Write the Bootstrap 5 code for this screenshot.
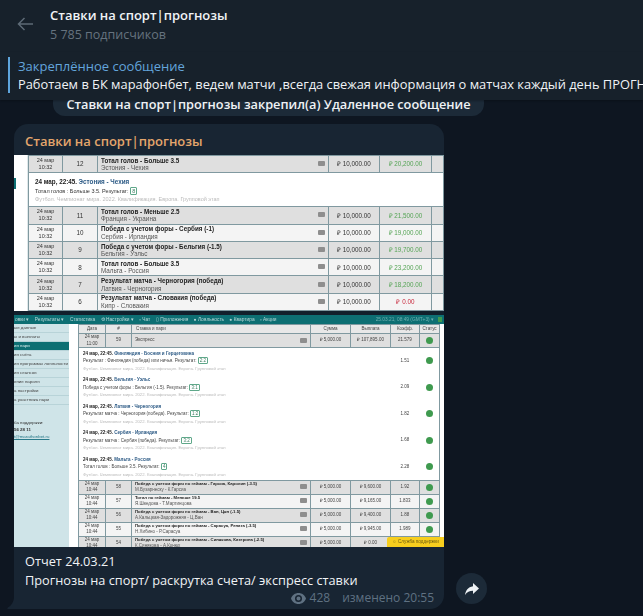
<!DOCTYPE html>
<html lang="ru">
<head>
    <meta charset="UTF-8">
    <title>Ставки на спорт|прогнозы</title>
    <link href="https://cdn.jsdelivr.net/npm/bootstrap@5.3.0/dist/css/bootstrap.min.css" rel="stylesheet">
    <style>
        html, body { height: 100%; }
        body { background: #0e1621; color: #f0f3f6; font-family: "Open Sans", "Liberation Sans", sans-serif; overflow: hidden; }
        .top-bar { background: #17212b; height: 52px; padding-left: 17px; }
        .top-arrow { margin: 17px 17px 0 0; flex: none; }
        .top-title { font-size: 13px; font-weight: 600; line-height: 18px; margin-top: 6px; }
        .top-sub { font-size: 12.5px; line-height: 18px; color: #66737f; margin-top: 2px; }
        .pin-bar { background: #17212b; height: 48px; padding: 5px 0 7px 8px; position: relative; z-index: 2; box-shadow: 0 1px 2px rgba(0,0,0,.25); white-space: nowrap; overflow: hidden; }
        .pin-line { width: 2px; background: #5ea5dc; flex: none; }
        .pin-label { color: #63a5dc; font-size: 13px; line-height: 18px; }
        .pin-text { font-size: 12.85px; line-height: 18px; }
        .service-pill { background: #1c2a38; width: 431px; height: 26px; margin: -10px 0 0 53px; border-radius: 12px; font-size: 12.75px; font-weight: 600; line-height: 24px; padding-top: 2px; text-align: center; white-space: nowrap; }
        .post-row { margin: 8px 0 0 14px; align-items: flex-end; }
        .bubble { width: 430px; height: 485px; background: #182533; border-radius: 14px 14px 14px 0; position: relative; }
        .bubble-tail { position: absolute; left: -7px; bottom: 0; }
        .post-author { color: #e4a56c; font-size: 13px; font-weight: 600; line-height: 18px; padding: 8px 11px 4px; height: 31px; }
        .post-caption { padding: 5px 11px 0; font-size: 12.75px; line-height: 19px; }
        .post-meta { color: #5f7182; font-size: 12px; line-height: 16px; padding-right: 10px; margin-top: 0; }
        .forward-btn { width: 31px; height: 31px; border-radius: 50%; background: #1c2a38; margin: 0 0 5px 12px; }

        /* скриншот 1 */
        .shot { background: #fff; color: #333; font-family: "Liberation Sans", sans-serif; overflow: hidden; filter: blur(.4px); }
        .shot-a { height: 156px; }
        .shot-a .shot-side { width: 14px; background: #fff; border-right: 1px solid #dfe8ea; flex: none; }
        .side-mark { width: 2px; height: 11px; margin-top: 23px; background: #0d6f73; }
        .shot table { table-layout: fixed; width: 100%; border-collapse: collapse; }
        .shot td, .shot th { border: 1px solid #8099a0; text-align: center; padding: 0; overflow: hidden; white-space: nowrap; }
        .shot-a td { font-size: 6.3px; height: 17.3px; line-height: 7.5px; }
        .shot-a .date-cell { font-size: 5.5px; line-height: 7px; }
        .shot-a .a-d { width: 34px; } .shot-a .a-n { width: 35px; } .shot-a .a-s { width: 51px; } .shot-a .a-w { width: 52px; } .shot-a .a-r { width: 12px; }
        .row-grey { background: #dfdfdf; }
        .row-light { background: #f4f4f4; }
        .bet-cell { position: relative; text-align: left !important; padding-left: 3px !important; }
        .bet-cell b { display: block; color: #222; }
        .bet-cell span { color: #555; }
        .bet-note { position: absolute; right: 3px; top: 50%; width: 7px; height: 5px; margin-top: -3px; background: #8e8e8e; border-radius: 1px; }
        .txt-win { color: #55a455; }
        .txt-lose { color: #c8283c; }
        .detail-box { text-align: left !important; padding: 2px 0 0 6px !important; background: #fff; line-height: 8.5px !important; }
        .shot-a .detail-box { font-size: 5.5px; }
        .shot-a .detail-box b, .shot-a .detail-box .teams { font-size: 6.3px; }
        .detail-box b { color: #222; }
        .detail-box .teams { color: #2c5a85; font-weight: 700; }
        .detail-box small { font-size: 100%; color: #bbb; display: block; }
        .score-tag { border: 1px solid #5fa88a; border-radius: 1px; padding: 0 1px; color: #3a7d60; }
        .dark-gap { height: 4px; background: #12202c; }

        /* скриншот 2 */
        .shot-b { height: 232px; position: relative; }
        .teal-nav { background: #0d6f73; color: #b9d8d8; height: 9px; font-size: 4.8px; line-height: 9px; white-space: nowrap; padding-left: 1px; }
        .nav-items { gap: 5.5px; }
        .nav-clock { color: #6fb0b0; }
        .nav-end { width: 4px; height: 5px; margin: 2px 2px 0 4px; background: #3f9a4f; }
        .side-blue { width: 55px; background: #cfe4e8; flex: none; font-size: 4.4px; color: #444; height: 223px; overflow: hidden; white-space: nowrap; }
        .side-blue div { height: 9px; line-height: 8.5px; border-bottom: 1px solid #b8d3d8; padding-left: 0; }
        .side-blue .side-on { background: #0d6f73; color: #d7ecec; }
        .side-blue .side-gap { border: 0; height: 14px; }
        .side-blue .side-plain { border: 0; height: 7px; line-height: 7px; color: #333; }
        .side-blue .side-mail { color: #2a7a8a; text-decoration: underline; }
        .main-b { padding: 0 4px 0 9px; min-width: 0; }
        .shot-b th { font-size: 4.5px; font-weight: 400; height: 9px; background: #e8e8e8; color: #444; line-height: 6px; }
        .shot-b td { font-size: 4.5px; line-height: 6.5px; color: #444; }
        .shot-b .bet-cell b { font-size: 4.25px; }
        .shot-b .row-plain td { height: 13.4px; }
        .shot-b .b-d { width: 27px; } .shot-b .b-n { width: 26px; } .shot-b .b-s { width: 40px; } .shot-b .b-w { width: 40px; } .shot-b .b-c { width: 29px; } .shot-b .b-st { width: 20px; }
        .shot-b .row-detail td { height: 26.6px; background: #fff; border-top: 0; border-bottom: 0; border-left: 0; border-right: 0; }
        .shot-b .row-detail td:first-child { border-left: 1px solid #8099a0; }
        .shot-b .row-detail td:last-child { border-right: 1px solid #8099a0; }
        .shot-b .row-detail .detail-box { padding: 0 0 0 4px !important; line-height: 7.5px !important; }
        .shot-b .detail-box small { font-size: 4.25px; }
        .st-ok { display: inline-block; width: 7px; height: 7px; border-radius: 50%; background: #3f9a4f; vertical-align: middle; }
        .help-btn { position: absolute; right: 0; bottom: 0; width: 57px; height: 10px; background: #f7ce1e; color: #6b5a10; font-size: 4.6px; line-height: 10px; text-align: center; border-radius: 2px 0 0 0; white-space: nowrap; }
    </style>
</head>
<body>
<div class="top-bar d-flex">
    <svg width="16" height="14" viewBox="0 0 16 14" class="top-arrow" fill="none" stroke="#5d6a76" stroke-width="1.5">
        <path d="M16 7H1.500M7.500 1L1.500 7l6 6"/>
    </svg>
    <div>
        <div class="top-title">Ставки на спорт|прогнозы</div>
        <div class="top-sub">5 785 подписчиков</div>
    </div>
</div>

<div class="pin-bar d-flex gap-2">
    <div class="pin-line"></div>
    <div>
        <div class="pin-label">Закреплённое сообщение</div>
        <div class="pin-text">Работаем в БК марафонбет, ведем матчи ,всегда свежая информация о матчах каждый день ПРОГНОЗЫ</div>
    </div>
</div>

<div class="service-pill">Ставки на спорт|прогнозы закрепил(а) Удаленное сообщение</div>

<div class="post-row d-flex">
    <div class="bubble">
        <svg class="bubble-tail" width="7" height="12" viewBox="0 0 7 12"><path d="M7 0v12H1C0 12 0 11 1 10.500 4 9 7 5 7 0z" fill="#182533"/></svg>
        <div class="post-author">Ставки на спорт|прогнозы</div>

        <div class="shot shot-a d-flex">
            <div class="shot-side"><div class="side-mark"></div></div>
            <div class="flex-grow-1">
                <table>
                    <colgroup><col class="a-d"><col class="a-n"><col><col class="a-s"><col class="a-w"><col class="a-r"></colgroup>
                    <tbody id="tableA"></tbody>
                </table>
            </div>
        </div>
        <div class="dark-gap"></div>

        <div class="shot shot-b">
            <div class="teal-nav d-flex justify-content-between">
                <div class="d-flex nav-items">
                    <span>овки ▾</span><span>Результаты ▾</span><span>Статистика</span><span>⚙ Настройки ▾</span><span>▫ Чат</span><span>▯ Приложения</span><span>● Лояльность</span><span>● Квартира</span><span>▫ Акции</span>
                </div>
                <div class="d-flex"><span class="nav-clock">25.03.21, 08:49 (GMT+3) ▾</span><div class="nav-end"></div></div>
            </div>
            <div class="d-flex">
                <div class="side-blue">
                    <div>ые данные</div>
                    <div>ы и выплаты</div>
                    <div class="side-on">ия пари</div>
                    <div>ия счёта</div>
                    <div>ия программы лояльности</div>
                    <div>ия сеансов</div>
                    <div>ение пароля</div>
                    <div>а настройки</div>
                    <div>а участника пари</div>
                    <div class="side-gap"></div>
                    <div class="side-plain">ба поддержки:</div>
                    <div class="side-plain"><b>56 28 11</b></div>
                    <div class="side-plain side-mail">t@marathonbet.ru</div>
                </div>
                <div class="main-b flex-grow-1 position-relative">
                    <table>
                        <colgroup><col class="b-d"><col class="b-n"><col><col class="b-s"><col class="b-w"><col class="b-c"><col class="b-st"></colgroup>
                        <thead><tr><th>Дата</th><th>#</th><th class="text-start ps-1">Ставка и пари</th><th>Сумма</th><th>Выплата</th><th>Коэфф.</th><th>Статус</th></tr></thead>
                        <tbody id="tableB"></tbody>
                    </table>
                </div>
            </div>
            <div class="help-btn">☺ Служба поддержки</div>
        </div>

        <div class="post-caption">
            <div>Отчет 24.03.21</div>
            <div>Прогнозы на спорт/ раскрутка счета/ экспресс ставки</div>
        </div>
        <div class="post-meta d-flex justify-content-end align-items-center gap-1">
            <svg width="15" height="11" viewBox="0 0 15 11"><path fill="#5f7182" fill-rule="evenodd" d="M7.500 0C4 0 1.200 2.200 0 5.500 1.200 8.800 4 11 7.500 11S13.800 8.800 15 5.500C13.800 2.200 11 0 7.500 0zm0 9a3.500 3.500 0 1 1 0-7 3.500 3.500 0 0 1 0 7zm0-5.500a2 2 0 1 0 0 4 2 2 0 0 0 0-4z"/></svg>
            <span>428</span><span class="ms-2">изменено 20:55</span>
        </div>
    </div>
    <div class="forward-btn d-flex align-items-center justify-content-center">
        <svg width="14" height="12" viewBox="0 0 14 12"><path fill="#eef2f5" d="M8 0l6 5.500L8 11V7.800C4.500 7.800 2 8.800 0 12 .6 7.500 3 4 8 3.200z"/></svg>
    </div>
</div>

<script>
    const rowsA = [
        ['24 мар', 12, 'Тотал голов - Больше 3.5', 'Эстония - Чехия', '₽ 20,200.00', 1],
        ['detail'],
        ['24 мар', 11, 'Тотал голов - Меньше 2.5', 'Франция - Украина', '₽ 21,500.00', 1],
        ['24 мар', 10, 'Победа с учетом форы - Сербия (-1)', 'Сербия - Ирландия', '₽ 19,000.00', 0],
        ['24 мар', 9, 'Победа с учетом форы - Бельгия (-1.5)', 'Бельгия - Уэльс', '₽ 19,700.00', 1],
        ['24 мар', 8, 'Тотал голов - Больше 3.5', 'Мальта - Россия', '₽ 23,200.00', 0],
        ['24 мар', 7, 'Результат матча - Черногория (победа)', 'Латвия - Черногория', '₽ 18,200.00', 1],
        ['24 мар', 6, 'Результат матча - Словакия (победа)', 'Кипр - Словакия', '₽ 0.00', 0]
    ];

    document.getElementById('tableA').innerHTML = rowsA.map(r => {
        if (r[0] === 'detail') {
            return `<tr><td colspan="6" class="detail-box" style="height:34px">
                <b>24 мар, 22:45.</b> <span class="teams">Эстония - Чехия</span><br>
                Тотал голов : Больше 3.5. Результат: <span class="score-tag">8</span>
                <small>Футбол. Чемпионат мира. 2022. Квалификация. Европа. Групповой этап</small></td></tr>`;
        }
        const win = r[4] === '₽ 0.00' ? 'txt-lose' : 'txt-win';
        return `<tr class="${r[5] ? 'row-grey' : 'row-light'}">
            <td class="date-cell">${r[0]}<br>10:32</td><td>${r[1]}</td>
            <td class="bet-cell"><b>${r[2]}</b><span>${r[3]}</span><i class="bet-note"></i></td>
            <td>₽ 10,000.00</td><td class="${win}">${r[4]}</td><td></td></tr>`;
    }).join('');

    const details = [
        ['Финляндия - Босния и Герцеговина', 'Результат : Финляндия (победа) или ничья', '2:2', '1.51'],
        ['Бельгия - Уэльс', 'Победа с учетом форы : Бельгия (-1.5)', '3:1', '2.09'],
        ['Латвия - Черногория', 'Результат матча : Черногория (победа)', '1:2', '1.82'],
        ['Сербия - Ирландия', 'Результат матча : Сербия (победа)', '3:2', '1.68'],
        ['Мальта - Россия', 'Тотал голов : Больше 3.5', '4', '2.28']
    ];
    const rowsB = [
        [58, 'Победа с учетом форы по геймам - Гарсиа, Каролин (-3.5)', 'М.Бузарнеску - К.Гарсиа', '₽ 9,600.00', '1.92', 1],
        [57, 'Тотал по геймам - Меньше 19.5', 'Я.Шведова - Т.Мартинцова', '₽ 9,165.00', '1.833', 0],
        [56, 'Победа с учетом форы по геймам - Ван, Цян (-1.5)', 'А.Кальцкая-Задорожняя - Ц.Ван', '₽ 9,400.00', '1.88', 1],
        [55, 'Победа с учетом форы по геймам - Сарасуа, Рената (-3.5)', 'Н.Хибино - Р.Сарасуа', '₽ 9,945.00', '1.989', 0],
        [54, 'Победа с учетом форы по геймам - Синякова, Катерина (-2.5)', 'К.Синякова - А.Конюх', '₽ 0.00', '', 1]
    ];

    let htmlB = `<tr class="row-grey row-plain"><td>24 мар<br>11:00</td><td>59</td>
        <td class="bet-cell">Экспресс<i class="bet-note"></i></td><td>₽ 5,000.00</td>
        <td class="txt-win">₽ 107,895.00</td><td>21.579</td><td><i class="st-ok"></i></td></tr>`;
    details.forEach(d => {
        htmlB += `<tr class="row-detail"><td colspan="5" class="detail-box">
            <b>24 мар, 22:45.</b> <span class="teams">${d[0]}</span><br>
            ${d[1]}. Результат: <span class="score-tag">${d[2]}</span>
            <small>Футбол. Чемпионат мира. 2022. Квалификация. Европа. Групповой этап</small></td>
            <td>${d[3]}</td><td><i class="st-ok"></i></td></tr>`;
    });
    rowsB.forEach(r => {
        const win = r[3] === '₽ 0.00' ? 'txt-lose' : 'txt-win';
        htmlB += `<tr class="${r[5] ? 'row-grey' : 'row-light'} row-plain"><td>24 мар<br>10:44</td><td>${r[0]}</td>
            <td class="bet-cell"><b>${r[1]}</b><span>${r[2]}</span><i class="bet-note"></i></td>
            <td>₽ 5,000.00</td><td class="${win}">${r[3]}</td><td>${r[4]}</td><td><i class="st-ok"></i></td></tr>`;
    });
    document.getElementById('tableB').innerHTML = htmlB;
</script>
<script src="https://cdn.jsdelivr.net/npm/bootstrap@5.3.0/dist/js/bootstrap.bundle.min.js"></script>
</body>
</html>
